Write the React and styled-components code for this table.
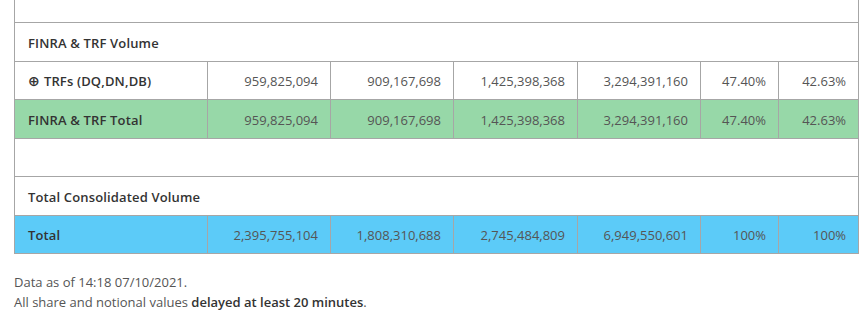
import React from "react";
import styled, {createGlobalStyle} from "styled-components";

const GlobalStyle = createGlobalStyle`
  html, body {
    margin: 0;
    padding: 0;
    background: #fff;
  }
  body {
    font-family: "Open Sans", "Liberation Sans", sans-serif;
    color: #555;
  }
`;

const Page = styled.div`
  padding: 0 0 0 14px;
`;

const Table = styled.table`
  border-collapse: collapse;
  width: 844px;
  table-layout: fixed;
  font-size: 13px;
`;

const Row = styled.tr`
  background: ${props => props.bg || '#fff'};
`;

const Cell = styled.td`
  border: 1px solid #a6a6a6;
  height: ${props => props.h || '35.5px'};
  padding: 2px 12px 0 13px;
  text-align: ${props => props.label ? 'left' : 'right'};
  font-weight: ${props => props.label ? 600 : 400};
  letter-spacing: ${props => props.label ? '0.15px' : '0'};
  color: ${props => props.label ? '#333' : '#555'};
  vertical-align: middle;
  white-space: nowrap;
  ${props => props.open && 'border-top: none;'}
`;

const Plus = styled.span`
  font-family: "DejaVu Sans", sans-serif;
  font-weight: 700;
  font-size: 14px;
  margin-right: 4px;
`;

const Notes = styled.div`
  margin-top: 19px;
  font-size: 13px;
  line-height: 19.5px;
  color: #555;

  b {
    font-weight: 600;
    color: #333;
  }
`;

const widths = [193, 123, 123, 124, 123, 78, 80];

const trfs = ['959,825,094', '909,167,698', '1,425,398,368', '3,294,391,160', '47.40%', '42.63%'];
const totals = ['2,395,755,104', '1,808,310,688', '2,745,484,809', '6,949,550,601', '100%', '100%'];

const DataRow = ({bg, label, values, plus}) =>
  <Row bg={bg}>
    <Cell label="1">{plus && <Plus>⊕</Plus>}{label}</Cell>
    {values.map((v, i) => <Cell key={i}>{v}</Cell>)}
  </Row>;

const SectionRow = ({children, h, open}) =>
  <Row>
    <Cell label="1" colSpan={7} h={h} open={open}>{children}</Cell>
  </Row>;

export default function App() {
  return <>
    <GlobalStyle/>
    <Page>
      <Table>
        <colgroup>
          {widths.map((w, i) => <col key={i} style={{width: w}}/>)}
        </colgroup>
        <tbody>
          <SectionRow h="20px" open/>
          <SectionRow>FINRA &amp; TRF Volume</SectionRow>
          <DataRow plus label="TRFs (DQ,DN,DB)" values={trfs}/>
          <DataRow bg="#97d8a8" label="FINRA & TRF Total" values={trfs}/>
          <SectionRow/>
          <SectionRow>Total Consolidated Volume</SectionRow>
          <DataRow bg="#5ccbf8" label="Total" values={totals}/>
        </tbody>
      </Table>
      <Notes>
        <div>Data as of 14:18 07/10/2021.</div>
        <div>All share and notional values <b>delayed at least 20 minutes</b>.</div>
      </Notes>
    </Page>
  </>;
}
